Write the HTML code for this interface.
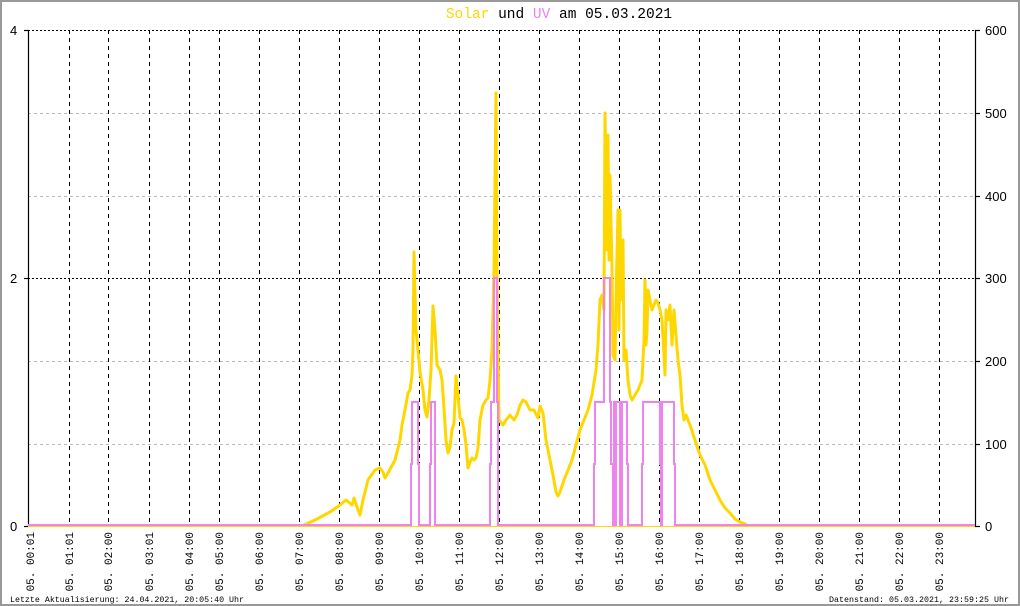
<!DOCTYPE html>
<html><head><meta charset="utf-8"><style>
html,body{margin:0;padding:0;background:#fff}
#w{position:relative;width:1020px;height:606px;overflow:hidden;background:#fff}
svg{position:absolute;left:0;top:0}
</style></head><body><div id="w">
<svg width="1020" height="606" viewBox="0 0 1020 606" xmlns="http://www.w3.org/2000/svg">
<rect x="1" y="1" width="1018" height="604" fill="#fff" stroke="#999" stroke-width="2"/>
<g stroke="#bbb" stroke-width="1" stroke-dasharray="3,3">
<line x1="28" y1="113.5" x2="975" y2="113.5"/><line x1="28" y1="196.5" x2="975" y2="196.5"/>
<line x1="28" y1="361.5" x2="975" y2="361.5"/><line x1="28" y1="444.5" x2="975" y2="444.5"/>
</g>
<g stroke="#000" stroke-width="1" stroke-dasharray="2,2">
<line x1="28" y1="30.5" x2="975" y2="30.5"/><line x1="28" y1="278.5" x2="975" y2="278.5"/>
</g>
<g stroke="#000" stroke-width="1" stroke-dasharray="4,4">
<line x1="69.5" y1="30" x2="69.5" y2="526"/><line x1="108.5" y1="30" x2="108.5" y2="526"/>
<line x1="149.5" y1="30" x2="149.5" y2="526"/><line x1="189.5" y1="30" x2="189.5" y2="526"/>
<line x1="219.5" y1="30" x2="219.5" y2="526"/><line x1="259.5" y1="30" x2="259.5" y2="526"/>
<line x1="299.5" y1="30" x2="299.5" y2="526"/><line x1="339.5" y1="30" x2="339.5" y2="526"/>
<line x1="379.5" y1="30" x2="379.5" y2="526"/><line x1="419.5" y1="30" x2="419.5" y2="526"/>
<line x1="459.5" y1="30" x2="459.5" y2="526"/><line x1="499.5" y1="30" x2="499.5" y2="526"/>
<line x1="539.5" y1="30" x2="539.5" y2="526"/><line x1="579.5" y1="30" x2="579.5" y2="526"/>
<line x1="619.5" y1="30" x2="619.5" y2="526"/><line x1="659.5" y1="30" x2="659.5" y2="526"/>
<line x1="699.5" y1="30" x2="699.5" y2="526"/><line x1="739.5" y1="30" x2="739.5" y2="526"/>
<line x1="779.5" y1="30" x2="779.5" y2="526"/><line x1="819.5" y1="30" x2="819.5" y2="526"/>
<line x1="859.5" y1="30" x2="859.5" y2="526"/><line x1="899.5" y1="30" x2="899.5" y2="526"/>
<line x1="939.5" y1="30" x2="939.5" y2="526"/>
</g>
<g stroke="#000" stroke-width="1.2" fill="none">
<line x1="28.5" y1="30" x2="28.5" y2="527"/><line x1="975.5" y1="30" x2="975.5" y2="527"/>
<line x1="24" y1="30.5" x2="29" y2="30.5"/><line x1="24" y1="278.5" x2="29" y2="278.5"/><line x1="24" y1="526.5" x2="29" y2="526.5"/>
<line x1="975" y1="30.5" x2="980" y2="30.5"/><line x1="975" y1="113.5" x2="980" y2="113.5"/><line x1="975" y1="196.5" x2="980" y2="196.5"/>
<line x1="975" y1="278.5" x2="980" y2="278.5"/><line x1="975" y1="361.5" x2="980" y2="361.5"/><line x1="975" y1="444.5" x2="980" y2="444.5"/><line x1="975" y1="526.5" x2="980" y2="526.5"/>
</g>
<line x1="28" y1="526.5" x2="975" y2="526.5" stroke="#ffd700" stroke-width="1"/>
<polyline fill="none" stroke="#ffd700" stroke-width="3" stroke-linejoin="round" points="302,526 315,520 330,512 340,505 346,500 352,505 354,498 358,510 360,515 363,500 368,480 375,470 380,468 383,472 385,478 388,473 395,460 400,440 402,425 405,410 408,393 410,390 412,375 413,350 414,252 416,330 417,340 420,372 423,390 425,410 427,417 429,400 431,370 433,306 435,330 437,365 440,370 442,380 444,408 446,440 448,453 450,447 452,430 454,423 456,376 458,395 460,418 462,420 464,430 466,445 468,468 470,462 472,458 474,460 476,458 478,448 480,420 483,405 486,400 488,398 490,380 492,350 494,270 496,93 497,270 499,420 503,425 506,420 510,415 514,420 517,415 520,405 523,400 526,402 530,410 534,410 538,418 540,406 543,413 546,440 550,460 553,475 556,492 558,496 560,492 564,480 568,470 572,460 576,445 580,430 584,420 588,410 592,395 596,370 598,345 600,300 602,295 604,310 605,113 607,250 608,135 609,260 610,175 612,270 613,355 615,360 616,300 618,210 619,330 620,210 621,300 623,240 624,360 626,350 628,380 630,395 632,400 635,395 638,390 640,385 642,380 643,360 644,340 645,280 646,345 647,330 648,290 650,300 652,310 654,305 656,300 658,303 660,310 662,320 664,355 665,375 666,310 668,320 670,305 672,345 674,310 676,335 678,360 680,375 682,405 684,420 686,415 688,420 690,425 695,440 700,455 705,465 710,480 715,490 720,500 725,508 730,513 735,519 740,522 745,524 748,526"/>
<path fill="none" stroke="#ee82ee" stroke-width="2" d="M28,525 H411 V464 H412 V402 H418 V464 H419 V525 H430 V464 H431 V402 H435 V525 H490 V464 H491 V402 H494 V278 H497 V402 H498 V525 H594 V464 H595 V402 H604 V278 H610 V402 H611 V464 H613 V525 H614 V402 H615 V525 H616 V402 H620 V525 H622 V402 H627 V464 H628 V525 H642 V464 H643 V402 H660 V464 H661 V525 H662 V402 H674 V464 H675 V525 H975"/>
<g font-family="Liberation Sans, sans-serif" font-size="13" fill="#000">
<text x="10" y="35">4</text><text x="10" y="283">2</text><text x="10" y="531">0</text>
<text x="985" y="35">600</text><text x="985" y="118">500</text><text x="985" y="201">400</text><text x="985" y="283">300</text>
<text x="985" y="366">200</text><text x="985" y="449">100</text><text x="985" y="531">0</text>
</g>
<g font-family="Liberation Mono, monospace" font-size="14.5" text-anchor="middle">
<text x="559" y="18"><tspan fill="#ffd700">Solar</tspan> und <tspan fill="#ee82ee">UV</tspan> am 05.03.2021</text>
</g>
<g font-family="Liberation Mono, monospace" font-size="11" fill="#000" text-anchor="end">
<text transform="translate(34,532) rotate(-90)">05. 00:01</text>
<text transform="translate(73,532) rotate(-90)">05. 01:01</text>
<text transform="translate(112,532) rotate(-90)">05. 02:00</text>
<text transform="translate(153,532) rotate(-90)">05. 03:01</text>
<text transform="translate(193,532) rotate(-90)">05. 04:00</text>
<text transform="translate(223,532) rotate(-90)">05. 05:00</text>
<text transform="translate(263,532) rotate(-90)">05. 06:00</text>
<text transform="translate(303,532) rotate(-90)">05. 07:00</text>
<text transform="translate(343,532) rotate(-90)">05. 08:00</text>
<text transform="translate(383,532) rotate(-90)">05. 09:00</text>
<text transform="translate(423,532) rotate(-90)">05. 10:00</text>
<text transform="translate(463,532) rotate(-90)">05. 11:00</text>
<text transform="translate(503,532) rotate(-90)">05. 12:00</text>
<text transform="translate(543,532) rotate(-90)">05. 13:00</text>
<text transform="translate(583,532) rotate(-90)">05. 14:00</text>
<text transform="translate(623,532) rotate(-90)">05. 15:00</text>
<text transform="translate(663,532) rotate(-90)">05. 16:00</text>
<text transform="translate(703,532) rotate(-90)">05. 17:00</text>
<text transform="translate(743,532) rotate(-90)">05. 18:00</text>
<text transform="translate(783,532) rotate(-90)">05. 19:00</text>
<text transform="translate(823,532) rotate(-90)">05. 20:00</text>
<text transform="translate(863,532) rotate(-90)">05. 21:00</text>
<text transform="translate(903,532) rotate(-90)">05. 22:00</text>
<text transform="translate(943,532) rotate(-90)">05. 23:00</text>
</g>
<g font-family="Liberation Mono, monospace" font-size="8.3" fill="#000">
<text x="10" y="602" textLength="234">Letzte Aktualisierung: 24.04.2021, 20:05:40 Uhr</text>
<text x="829" y="602" textLength="180">Datenstand: 05.03.2021, 23:59:25 Uhr</text>
</g>
</svg>
</div></body></html>
